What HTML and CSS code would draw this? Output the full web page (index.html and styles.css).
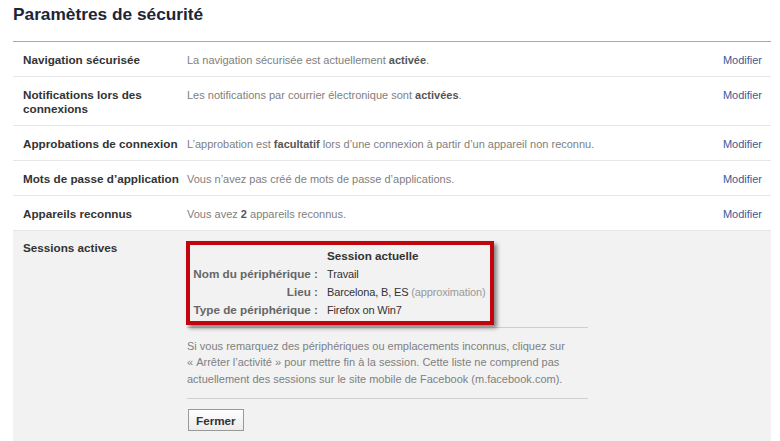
FILE: index.html
```html
<!DOCTYPE html>
<html lang="fr">

<head>
  <meta charset="UTF-8">
  <meta name="viewport" content="width=device-width, initial-scale=1.0">
  <title>Paramètres de sécurité</title>

  <link rel="stylesheet" href="styles.css">
</head>

<body>
  <div id="container">
    <h2 class="pageTitle">Paramètres de sécurité</h2>

    <ul class="settings">
      <li class="settingRow">
        <div class="settingLabel">Navigation sécurisée</div>
        <div class="settingDesc">La navigation sécurisée est actuellement <b>activée</b>.</div>
        <a class="editLink" href="#">Modifier</a>
      </li>

      <li class="settingRow">
        <div class="settingLabel">Notifications lors des connexions</div>
        <div class="settingDesc">Les notifications par courrier électronique sont <b>activées</b>.</div>
        <a class="editLink" href="#">Modifier</a>
      </li>

      <li class="settingRow">
        <div class="settingLabel">Approbations de connexion</div>
        <div class="settingDesc">L’approbation est <b>facultatif</b> lors d’une connexion à partir d’un appareil non reconnu.</div>
        <a class="editLink" href="#">Modifier</a>
      </li>

      <li class="settingRow">
        <div class="settingLabel">Mots de passe d’application</div>
        <div class="settingDesc">Vous n’avez pas créé de mots de passe d’applications.</div>
        <a class="editLink" href="#">Modifier</a>
      </li>

      <li class="settingRow">
        <div class="settingLabel">Appareils reconnus</div>
        <div class="settingDesc">Vous avez <b>2</b> appareils reconnus.</div>
        <a class="editLink" href="#">Modifier</a>
      </li>

      <li class="settingRow openRow">
        <div class="settingLabel">Sessions actives</div>

        <div class="sessionPanel">
          <div class="sessionWrap">
            <div class="sessionBox">
              <div class="sessionGrid">
                <span></span>
                <span class="sessionHead">Session actuelle</span>

                <span class="sessionKey">Nom du périphérique :</span>
                <span class="sessionVal">Travail</span>

                <span class="sessionKey">Lieu :</span>
                <span class="sessionVal">Barcelona, B, ES <span class="muted">(approximation)</span></span>

                <span class="sessionKey">Type de périphérique :</span>
                <span class="sessionVal">Firefox on Win7</span>
              </div>
            </div>
          </div>

          <p class="sessionNote">Si vous remarquez des périphériques ou emplacements inconnus, cliquez sur
            «&nbsp;Arrêter l’activité&nbsp;» pour mettre fin à la session. Cette liste ne comprend pas
            actuellement des sessions sur le site mobile de Facebook (m.facebook.com).</p>

          <div class="panelActions">
            <button class="closeButton">Fermer</button>
          </div>
        </div>
      </li>
    </ul>
  </div>
</body>

</html>
```

FILE: styles.css
```css
body {
  margin: 0px;
  background-color: #fff;
  font-family: "Liberation Sans", Arial, sans-serif;
  font-size: 11px;
  color: #333;
}

#container {
  width: 758px;
  height: 441px;
  margin-left: 13px;
  overflow: hidden;
}

.pageTitle {
  margin: 0px 0px 17px 0px;
  padding-top: 4px;
  font-size: 17.3px;
  line-height: 20px;
  font-weight: bold;
  color: #1e2535;
}

.settings {
  list-style: none;
  margin: 0px;
  padding: 0px;
  border-top: 1px solid #a8a8a8;
}

.settingRow {
  display: flex;
  align-items: flex-start;
  padding: 11px 9px 9px 10px;
  line-height: 14px;
  border-bottom: 1px solid #e6e6e6;
}

.settingLabel {
  width: 164px;
  flex-shrink: 0;
  font-size: 11.7px;
  font-weight: bold;
  color: #333;
}

.settingDesc {
  flex: 1;
  color: #808080;
}

.settingDesc b {
  color: #555;
}

.editLink {
  color: #3b5998;
  text-decoration: none;
}

.openRow {
  background-color: #f2f2f2;
  padding-top: 10px;
  height: 220px;
  border-bottom: none;
}

.sessionPanel {
  width: 401px;
}

.sessionWrap {
  padding-bottom: 2px;
  border-bottom: 1px solid #cfcfcf;
}

.sessionBox {
  width: 300px;
  margin-left: -1px;
  border: 4px solid #c2040b;
  box-shadow: 3px 3px 4px rgba(0, 0, 0, 0.45);
}

.sessionGrid {
  display: grid;
  grid-template-columns: 128px 1fr;
  column-gap: 9px;
  padding: 2px 0px;
  line-height: 18px;
  color: #333;
}

.sessionHead {
  font-size: 11.7px;
  font-weight: bold;
}

.sessionKey {
  text-align: right;
  font-size: 11.7px;
  font-weight: bold;
  color: #666;
  white-space: nowrap;
}

.sessionVal {
  white-space: nowrap;
  letter-spacing: -0.15px;
}

.muted {
  color: #999;
}

.sessionNote {
  margin: 10px 0px 11px 0px;
  line-height: 16.4px;
  color: #808080;
}

.panelActions {
  border-top: 1px solid #cfcfcf;
  padding-top: 10px;
}

.closeButton {
  margin-left: 1px;
  height: 22px;
  padding: 0px 7px;
  font-family: "Liberation Sans", Arial, sans-serif;
  font-size: 11.7px;
  font-weight: bold;
  color: #333;
  background: linear-gradient(#ffffff, #ececec);
  border: 1px solid #999;
  border-radius: 0px;
}
```
